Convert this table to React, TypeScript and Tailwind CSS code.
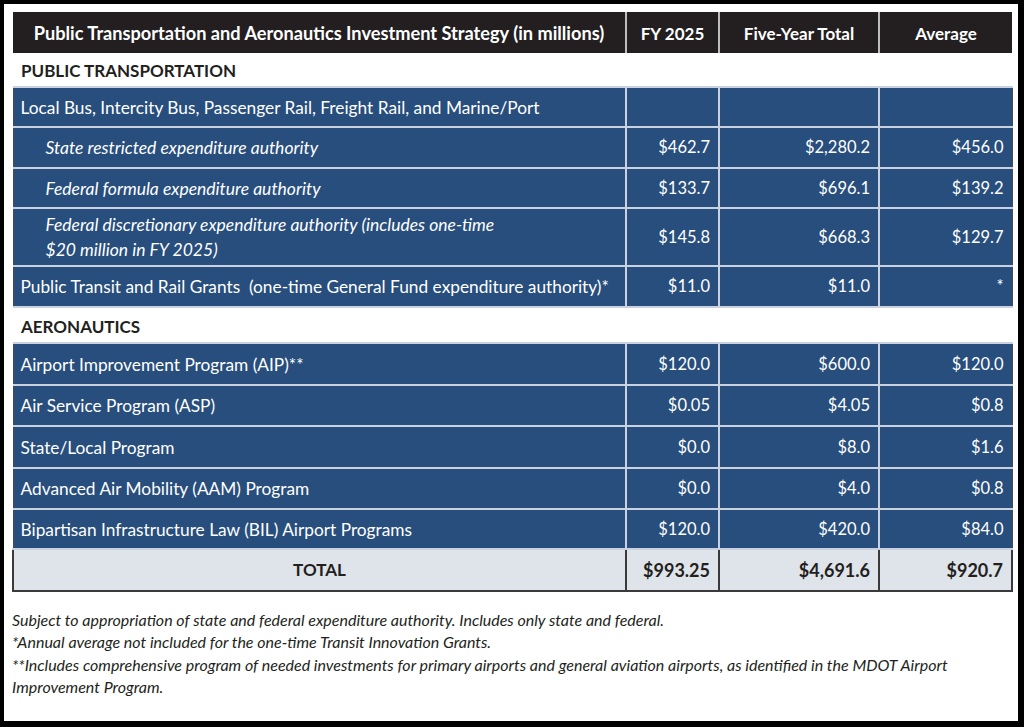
import React from 'react';

type Row = {
  label: React.ReactNode;
  italic?: boolean;
  fy: string;
  total: string;
  avg: string;
  h: string;
};

const transit: Row[] = [
  { label: 'Local Bus, Intercity Bus, Passenger Rail, Freight Rail, and Marine/Port', fy: '', total: '', avg: '', h: 'h-[40px]' },
  { label: 'State restricted expenditure authority', italic: true, fy: '$462.7', total: '$2,280.2', avg: '$456.0', h: 'h-[41px]' },
  { label: 'Federal formula expenditure authority', italic: true, fy: '$133.7', total: '$696.1', avg: '$139.2', h: 'h-[40px]' },
  {
    label: (
      <>
        Federal discretionary expenditure authority (includes one-time
        <br />
        $20 million in FY 2025)
      </>
    ),
    italic: true,
    fy: '$145.8',
    total: '$668.3',
    avg: '$129.7',
    h: 'h-[58px]',
  },
  { label: 'Public Transit and Rail Grants  (one-time General Fund expenditure authority)*', fy: '$11.0', total: '$11.0', avg: '*', h: 'h-[41px]' },
];

const aero: Row[] = [
  { label: 'Airport Improvement Program (AIP)**', fy: '$120.0', total: '$600.0', avg: '$120.0', h: 'h-[42px]' },
  { label: 'Air Service Program (ASP)', fy: '$0.05', total: '$4.05', avg: '$0.8', h: 'h-[41px]' },
  { label: 'State/Local Program', fy: '$0.0', total: '$8.0', avg: '$1.6', h: 'h-[42px]' },
  { label: 'Advanced Air Mobility (AAM) Program', fy: '$0.0', total: '$4.0', avg: '$0.8', h: 'h-[41px]' },
  { label: 'Bipartisan Infrastructure Law (BIL) Airport Programs', fy: '$120.0', total: '$420.0', avg: '$84.0', h: 'h-[40px]' },
];

const cell = 'border-2 border-[#c9d2de] px-[8px] text-right text-[16.5px]';

function DataRow({ row }: { row: Row }) {
  return (
    <tr className={`${row.h} bg-[#274e7c] text-white leading-[25px]`}>
      <td
        className={`border-2 border-[#c9d2de] border-l-[#4a4a4a] border-l-[1px] ${
          row.italic ? 'italic pl-[32px] text-[17.5px]' : 'pl-[7px] text-[17.3px]'
        } text-left whitespace-pre`}
      >
        {row.label}
      </td>
      <td className={cell}>{row.fy}</td>
      <td className={cell}>{row.total}</td>
      <td className={`${cell} border-r-[#4a4a4a] border-r-[1px]`}>{row.avg}</td>
    </tr>
  );
}

function Section({ title, h }: { title: string; h: string }) {
  return (
    <tr className={`${h} bg-white`}>
      <td colSpan={4} className="px-[8px] pt-[3px] text-left text-[17px] font-bold text-[#231f20]">
        {title}
      </td>
    </tr>
  );
}

export default function App() {
  return (
    <div className="w-[1024px] h-[727px] bg-black pt-[4px] pl-[4px] overflow-hidden">
      <div
        className="w-[1014px] h-[717px] bg-white pt-[8px] pl-[8px]"
        style={{ fontFamily: 'Lato, "Open Sans", sans-serif' }}
      >
        <table className="w-[999px] border-collapse table-fixed">
          <colgroup>
            <col className="w-[613px]" />
            <col className="w-[93px]" />
            <col className="w-[160px]" />
            <col className="w-[133px]" />
          </colgroup>
          <thead>
            <tr className="h-[41px] bg-[#231f20] text-white text-[17px] font-bold">
              <th className="border-r-2 border-[#bdbdbd] pt-[3px] text-center text-[18.2px]">
                Public Transportation and Aeronautics Investment Strategy (in millions)
              </th>
              <th className="border-r-2 border-[#bdbdbd] pt-[3px] text-center">FY 2025</th>
              <th className="border-r-2 border-[#bdbdbd] pt-[3px] text-center">Five-Year Total</th>
              <th className="pt-[3px] text-center">Average</th>
            </tr>
          </thead>
          <tbody>
            <Section title="PUBLIC TRANSPORTATION" h="h-[34px]" />
            {transit.map((r, i) => (
              <DataRow key={i} row={r} />
            ))}
            <Section title="AERONAUTICS" h="h-[36px]" />
            {aero.map((r, i) => (
              <DataRow key={i} row={r} />
            ))}
            <tr className="h-[42px] bg-[#dfe3ea] text-[#231f20] text-[17px] font-bold">
              <td className="border-2 border-[#3a3a3a] border-t-[#c9d2de] text-center">TOTAL</td>
              <td className="border-2 border-[#3a3a3a] border-t-[#c9d2de] px-[8px] text-right text-[18px]">$993.25</td>
              <td className="border-2 border-[#3a3a3a] border-t-[#c9d2de] px-[8px] text-right text-[18px]">$4,691.6</td>
              <td className="border-2 border-[#3a3a3a] border-t-[#c9d2de] px-[8px] text-right text-[18px]">$920.7</td>
            </tr>
          </tbody>
        </table>
        <div className="mt-[17px] text-[16px] leading-[22.3px] italic text-[#231f20]">
          <p>Subject to appropriation of state and federal expenditure authority. Includes only state and federal.</p>
          <p>*Annual average not included for the one-time Transit Innovation Grants.</p>
          <p>
            **Includes comprehensive program of needed investments for primary airports and general aviation airports, as identified in the MDOT Airport
            <br />
            Improvement Program.
          </p>
        </div>
      </div>
    </div>
  );
}
